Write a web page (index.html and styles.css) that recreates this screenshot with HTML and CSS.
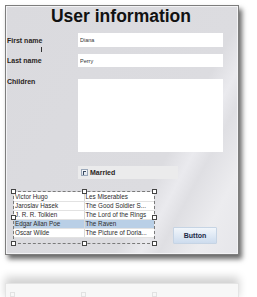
FILE: index.html
```html
<!DOCTYPE html>
<html lang="en">
    <head>
        <meta charset="utf-8">
        <title>User information</title>
        <link rel="stylesheet" href="styles.css">
    </head>
    <body>
        <div class="panel">
            <h1>User information</h1>
            <form class="fields" action="#">
                <label for="first" class="first-label">First name<span class="caret"></span></label>
                <input type="text" id="first" value="Diana">
                <label for="last">Last name</label>
                <input type="text" id="last" value="Perry">
                <label for="children" class="top">Children</label>
                <textarea id="children"></textarea>
                <span></span>
                <div class="married"><span class="check"></span>Married</div>
            </form>
            <div class="bottom">
                <div class="selection">
                    <table class="books">
                        <tr><td>Victor Hugo</td><td>Les Miserables</td></tr>
                        <tr><td>Jaroslav Hasek</td><td>The Good Soldier S...</td></tr>
                        <tr><td>J. R. R. Tolkien</td><td>The Lord of the Rings</td></tr>
                        <tr class="selected"><td>Edgar Allan Poe</td><td>The Raven</td></tr>
                        <tr><td>Oscar Wilde</td><td>The Picture of Doria...</td></tr>
                    </table>
                    <span class="handle tl"></span>
                    <span class="handle tm"></span>
                    <span class="handle tr"></span>
                    <span class="handle ml"></span>
                    <span class="handle mr"></span>
                    <span class="handle bl"></span>
                    <span class="handle bm"></span>
                    <span class="handle br"></span>
                </div>
                <a href="#" class="button">Button</a>
            </div>
        </div>
        <div class="reflection">
            <span class="ghost g1"></span>
            <span class="ghost g2"></span>
            <span class="ghost g3"></span>
        </div>
    </body>
</html>
```

FILE: styles.css
```css
* {
    margin: 0;
    padding: 0;
    box-sizing: border-box;
}
body {
    background: #fff;
    font-family: "Liberation Sans", Arial, sans-serif;
    overflow: hidden;
}
a {
    text-decoration: none;
}
.panel {
    width: 234px;
    height: 250px;
    margin: 5px 0 0 5px;
    padding: 0 1px;
    border: 1px solid #7d7d7d;
    background: linear-gradient(118deg, #dadade 0%, #dcdce0 66%, #eaeaee 73%, #dfdfe3 78%, #ececef 88%, #e6e6ea 100%);
    box-shadow: inset 0 0 0 1px #f3f3f5, 3px 4px 5px rgba(0, 0, 0, 0.6);
}
h1 {
    font-size: 17.5px;
    line-height: 20px;
    text-align: center;
    color: #111;
    padding-right: 2px;
}
.fields {
    display: grid;
    grid-template-columns: 71px 145px;
    row-gap: 7px;
    margin-top: 7px;
    align-items: center;
}
label {
    font-size: 7px;
    font-weight: bold;
    color: #2a1f22;
    position: relative;
}
label.top {
    align-self: start;
    margin-top: 4px;
}
.caret {
    position: absolute;
    left: 34px;
    top: 10px;
    width: 1px;
    height: 5px;
    background: #333;
}
input, textarea {
    display: block;
    width: 145px;
    height: 14px;
    border: none;
    background: #fff;
    padding: 0 2px;
    font-family: "Liberation Sans", Arial, sans-serif;
    font-size: 5.5px;
    color: #333;
    outline: none;
    resize: none;
}
#last {
    height: 13px;
}
#children {
    height: 73px;
    margin-top: 5px;
}
.married {
    display: flex;
    align-items: center;
    width: 100px;
    height: 13px;
    margin-top: 7px;
    padding-left: 3px;
    background: #ebebec;
    font-size: 7px;
    font-weight: bold;
    color: #2a1f22;
}
.check {
    width: 7px;
    height: 7px;
    margin-right: 2px;
    border: 1px solid #9aa8ba;
    background: linear-gradient(#f8f9fb, #dde3ec);
    position: relative;
}
.check::after {
    content: "";
    position: absolute;
    left: 1px;
    top: 1px;
    width: 2px;
    height: 3px;
    border-left: 1px solid #3a4a60;
    border-top: 1px solid #3a4a60;
}
.bottom {
    display: flex;
    align-items: flex-end;
    margin-top: 12px;
    padding-left: 6px;
}
.selection {
    position: relative;
    width: 142px;
    height: 53px;
    border: 1px dashed #7a7a7a;
}
.books {
    border-collapse: collapse;
    width: 140px;
    table-layout: fixed;
    font-size: 6.3px;
    color: #2c2c2c;
}
.books td {
    height: 9px;
    padding: 0 1px;
    background: #fff;
    border-bottom: 1px solid #e2e2e2;
    white-space: nowrap;
    overflow: hidden;
}
.books td:first-child {
    width: 70px;
    border-right: 1px solid #d8d8d8;
}
.books .selected td {
    background: #b9cfe6;
}
.handle {
    position: absolute;
    width: 5px;
    height: 5px;
    border: 1px solid #444;
    background: #fff;
}
.tl { left: -3px; top: -3px; }
.tm { left: 68px; top: -3px; }
.tr { right: -3px; top: -3px; }
.ml { left: -3px; top: 23px; }
.mr { right: -3px; top: 23px; }
.bl { left: -3px; bottom: -3px; }
.bm { left: 68px; bottom: -3px; }
.br { right: -3px; bottom: -3px; }
.button {
    display: block;
    width: 44px;
    height: 17px;
    margin-left: 18px;
    border: 1px solid #c6d4e4;
    border-radius: 1px;
    background: linear-gradient(#f2f6fb, #cddcee);
    font-size: 7px;
    font-weight: bold;
    line-height: 15px;
    text-align: center;
    color: #1c2a48;
}
.reflection {
    position: relative;
    width: 234px;
    height: 20px;
    margin: 28px 0 0 5px;
    border: 1px solid #e4e4e4;
    border-bottom: none;
    background: #f7f7f7;
    box-shadow: 0 -6px 8px rgba(0, 0, 0, 0.18);
}
.ghost {
    position: absolute;
    top: 8px;
    width: 5px;
    height: 5px;
    border: 1px solid #e2e2e2;
}
.g1 { left: 4px; }
.g2 { left: 75px; }
.g3 { left: 146px; }
```
